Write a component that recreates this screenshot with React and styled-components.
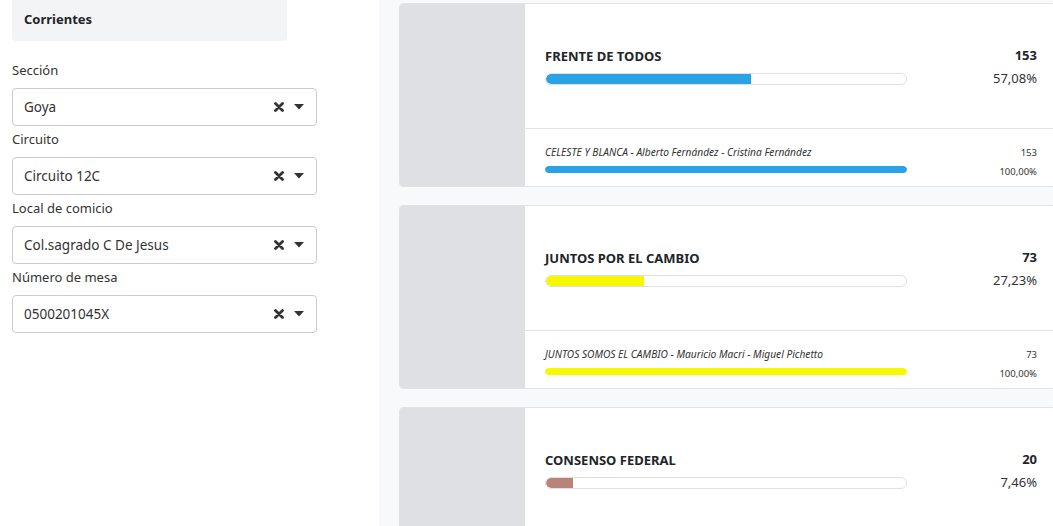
import React from "react";
import styled, { createGlobalStyle } from "styled-components";

const GlobalStyle = createGlobalStyle`
  body {
    margin: 0;
    font-family: "Noto Sans", "Open Sans", sans-serif;
    color: #212529;
    background: #fff;
  }
`;

const Page = styled.div`
  display: grid;
  grid-template-columns: 379px 1fr;
  height: 526px;
  overflow: hidden;
`;

const Sidebar = styled.aside`
  padding: 0 12px;
  background: #fff;
`;

const Province = styled.div`
  width: 275px;
  height: 41px;
  box-sizing: border-box;
  padding: 0 0 3px 12px;
  display: flex;
  align-items: center;
  background: #f3f4f6;
  border-radius: 0 0 4px 4px;
  font-size: 13px;
  font-weight: 700;
  color: #212529;
`;

const Fields = styled.div`
  display: flex;
  flex-direction: column;
  gap: 3px;
  margin-top: 19px;
`;

const Label = styled.label`
  display: block;
  font-size: 13px;
  line-height: 20px;
  color: #333;
  margin-bottom: 8px;
`;

const SelectBox = styled.div`
  width: 305px;
  height: 38px;
  box-sizing: border-box;
  border: 1px solid #ccc;
  border-radius: 4px;
  display: flex;
  align-items: center;
  padding: 0 12px 0 11px;
  font-size: 13.5px;
  color: #333;
`;

const Value = styled.span`
  flex: 1;
`;

const Icons = styled.span`
  display: flex;
  align-items: center;
  gap: 10px;
`;

const Main = styled.main`
  background: #f8f9fa;
  padding: 3px 0 0 20px;
  margin-right: -3px;
`;

const Card = styled.section`
  display: grid;
  grid-template-columns: 125px 1fr;
  height: 184px;
  box-sizing: border-box;
  background: #fff;
  border: 1px solid #e2e3e5;
  border-radius: 4px;
  margin-bottom: 18px;
  overflow: hidden;
`;

const Logo = styled.div`
  background: #dfe0e3;
`;

const Body = styled.div`
  display: flex;
  flex-direction: column;
`;

const PartyRow = styled.div`
  height: 125px;
  flex-shrink: 0;
  box-sizing: border-box;
  border-bottom: 1px solid #e2e3e5;
  display: flex;
  align-items: center;
  justify-content: space-between;
  padding: 0 18px 0 20px;
`;

const ListRow = styled.div`
  flex: 1;
  display: flex;
  align-items: center;
  justify-content: space-between;
  padding: 4px 18px 0 20px;
`;

const Info = styled.div`
  width: 362px;
`;

const PartyName = styled.div`
  font-size: 13px;
  font-weight: 700;
  line-height: 18px;
  margin-bottom: 8px;
  color: #212529;
`;

const ListName = styled.div`
  font-size: 10.2px;
  font-style: italic;
  line-height: 13px;
  margin-bottom: 7px;
  color: #333;
  white-space: nowrap;
`;

const Track = styled.div`
  height: ${(p) => (p.$thin ? "7px" : "12px")};
  box-sizing: border-box;
  border: ${(p) => (p.$thin ? "none" : "1px solid #e0e0e0")};
  border-radius: 7px;
  overflow: hidden;
  background: #fff;
`;

const Fill = styled.div`
  height: 100%;
  background: ${(p) => p.$color};
  border-radius: ${(p) => (p.$full ? "7px" : "7px 0 0 7px")};
`;

const Numbers = styled.div`
  text-align: right;
  display: flex;
  flex-direction: column;
  gap: ${(p) => (p.$small ? "6px" : "5px")};
  margin-top: ${(p) => (p.$small ? "5px" : "0")};
`;

const Votes = styled.span`
  font-size: ${(p) => (p.$small ? "9.5px" : "13px")};
  font-weight: ${(p) => (p.$small ? 400 : 700)};
  line-height: ${(p) => (p.$small ? "13px" : "18px")};
  color: ${(p) => (p.$small ? "#333" : "#212529")};
`;

const Percent = styled.span`
  font-size: ${(p) => (p.$small ? "9.5px" : "13px")};
  line-height: ${(p) => (p.$small ? "13px" : "18px")};
  color: #333;
`;

const TimesIcon = () => (
  <svg width="10" height="10" viewBox="0 0 10 10">
    <path d="M1.5 1.5 L8.5 8.5 M8.5 1.5 L1.5 8.5" stroke="#333" strokeWidth="2.8" strokeLinecap="round" />
  </svg>
);

const CaretIcon = () => (
  <svg width="10" height="6" viewBox="0 0 10 6">
    <path d="M0 0 H10 L5 5.5 Z" fill="#333" />
  </svg>
);

const fields = [
  { label: "Sección", value: "Goya" },
  { label: "Circuito", value: "Circuito 12C" },
  { label: "Local de comicio", value: "Col.sagrado C De Jesus" },
  { label: "Número de mesa", value: "0500201045X" },
];

// la tercera lista queda fuera de la vista
const parties = [
  {
    name: "FRENTE DE TODOS",
    votes: 153,
    percent: "57,08%",
    width: 57.08,
    color: "#29a3e6",
    list: "CELESTE Y BLANCA - Alberto Fernández - Cristina Fernández",
    listVotes: 153,
  },
  {
    name: "JUNTOS POR EL CAMBIO",
    votes: 73,
    percent: "27,23%",
    width: 27.23,
    color: "#f7f700",
    list: "JUNTOS SOMOS EL CAMBIO - Mauricio Macri - Miguel Pichetto",
    listVotes: 73,
  },
  {
    name: "CONSENSO FEDERAL",
    votes: 20,
    percent: "7,46%",
    width: 7.46,
    color: "#b8847a",
    list: null,
  },
];

const App = () => {
  return (
    <>
      <GlobalStyle />
      <Page>
        <Sidebar>
          <Province>Corrientes</Province>
          <Fields>
            {fields.map((f) => (
              <div key={f.label}>
                <Label>{f.label}</Label>
                <SelectBox>
                  <Value>{f.value}</Value>
                  <Icons>
                    <TimesIcon />
                    <CaretIcon />
                  </Icons>
                </SelectBox>
              </div>
            ))}
          </Fields>
        </Sidebar>
        <Main>
          {parties.map((p) => (
            <Card key={p.name}>
              <Logo />
              <Body>
                <PartyRow>
                  <Info>
                    <PartyName>{p.name}</PartyName>
                    <Track>
                      <Fill $color={p.color} style={{ width: `${p.width}%` }} />
                    </Track>
                  </Info>
                  <Numbers>
                    <Votes>{p.votes}</Votes>
                    <Percent>{p.percent}</Percent>
                  </Numbers>
                </PartyRow>
                {p.list && (
                  <ListRow>
                    <Info>
                      <ListName>{p.list}</ListName>
                      <Track $thin>
                        <Fill $color={p.color} $full style={{ width: "100%" }} />
                      </Track>
                    </Info>
                    <Numbers $small>
                      <Votes $small>{p.listVotes}</Votes>
                      <Percent $small>100,00%</Percent>
                    </Numbers>
                  </ListRow>
                )}
              </Body>
            </Card>
          ))}
        </Main>
      </Page>
    </>
  );
};

export default App;
